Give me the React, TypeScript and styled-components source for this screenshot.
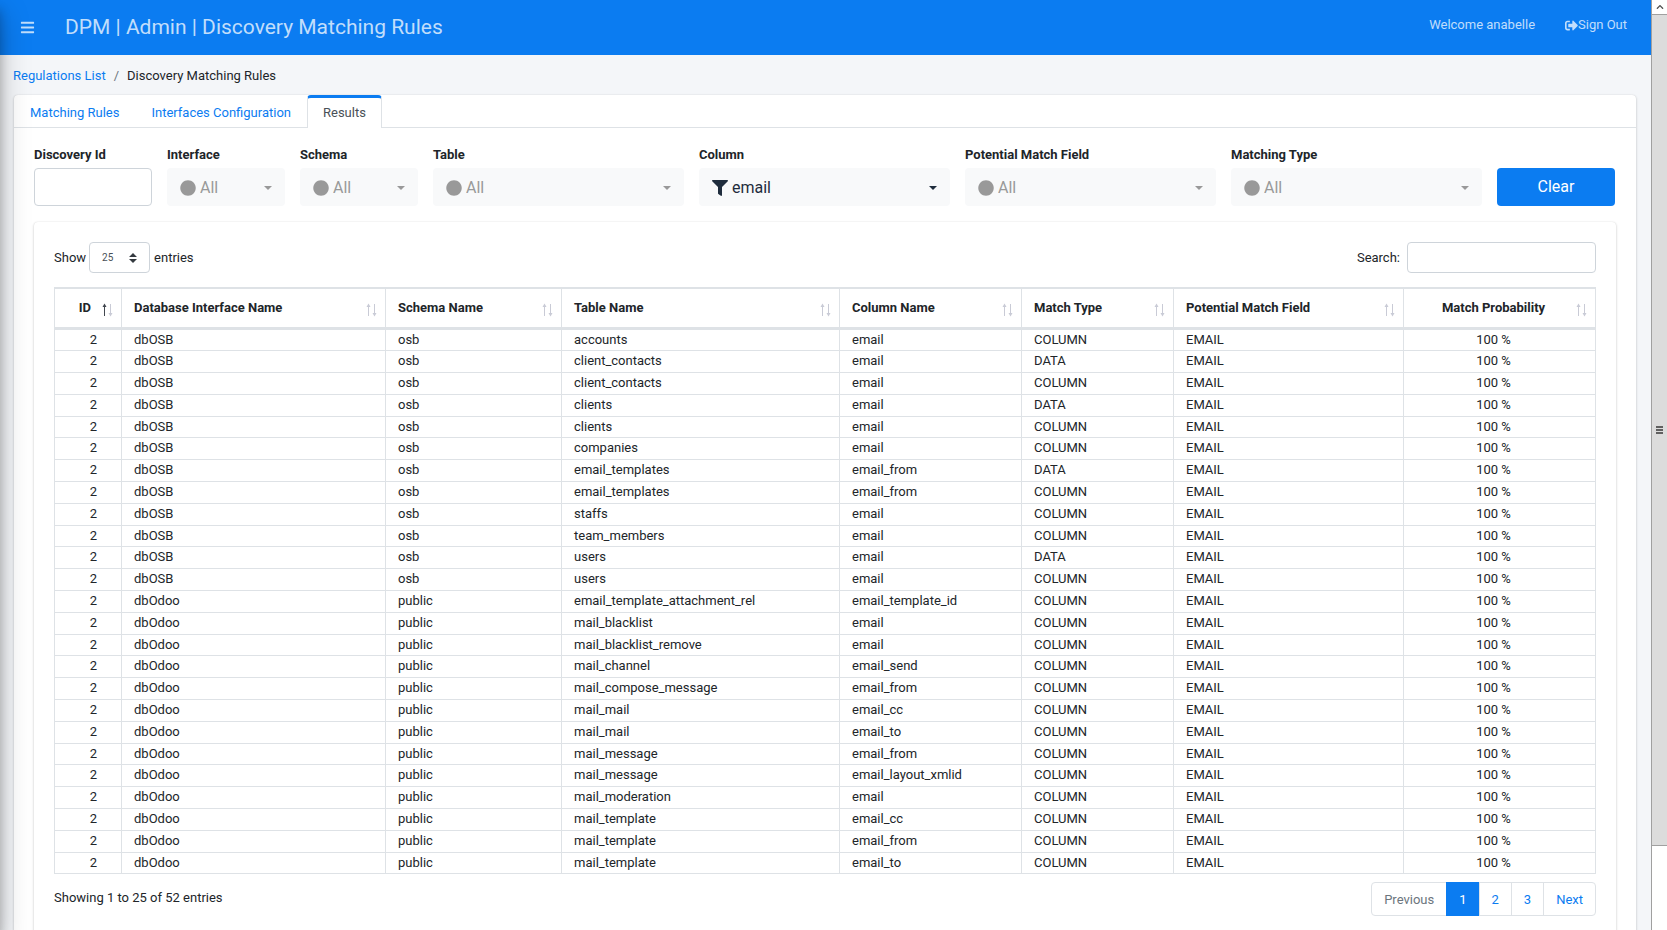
import React from "react";
import styled, { createGlobalStyle, css } from "styled-components";
import { FaBars, FaCircle, FaFilter, FaSignOutAlt, FaChevronUp } from "react-icons/fa";

const blue = "#0b7cf1";
const line = "#dee2e6";
const ink = "#212529";

const GlobalStyle = createGlobalStyle`
  *, *::before, *::after { box-sizing: border-box; }
  body {
    margin: 0;
    background: #f4f6f9;
    color: ${ink};
    font-family: Roboto, "Liberation Sans", sans-serif;
    font-size: 13px;
    line-height: 20px;
  }
  button, input, select { font: inherit; color: inherit; }
  a { color: ${blue}; text-decoration: none; }
`;

const Shell = styled.div`
  display: flex;
  height: 100vh;
  overflow: hidden;
  position: relative;
`;

const SidebarEdge = styled.div`
  position: absolute;
  top: 0;
  bottom: 0;
  left: -250px;
  width: 250px;
  z-index: 2;
  pointer-events: none;
  box-shadow: 0 14px 28px rgba(0, 0, 0, 0.25), 0 10px 10px rgba(0, 0, 0, 0.22);
`;

const Page = styled.div`
  flex: 1;
  min-width: 0;
`;

const Header = styled.header`
  display: flex;
  align-items: center;
  height: 55px;
  padding: 0 24px 0 20px;
  background: ${blue};
  color: rgba(255, 255, 255, 0.75);
`;

const MenuButton = styled.button`
  display: flex;
  padding: 0;
  border: 0;
  background: none;
  font-size: 15px;
`;

const Title = styled.h1`
  flex: 1;
  margin: 0 0 0 30px;
  padding-bottom: 2px;
  font-size: 21px;
  line-height: 24px;
  font-weight: 400;
`;

const UserNav = styled.nav`
  display: flex;
  gap: 30px;
  padding-bottom: 5px;
  a {
    display: flex;
    align-items: center;
    color: inherit;
  }
`;

const Breadcrumb = styled.nav`
  display: flex;
  gap: 8px;
  padding: 11px 13px 9px;
  span { color: #6c757d; }
`;

const Card = styled.main`
  margin: 0 15px 0 14px;
  background: #fff;
  border-radius: 4px;
  box-shadow: 0 0 1px rgba(0, 0, 0, 0.125), 0 1px 3px rgba(0, 0, 0, 0.2);
`;

const Tabs = styled.div`
  display: flex;
  height: 33px;
  border-bottom: 1px solid ${line};
`;

const Tab = styled.button<{ $active?: boolean }>`
  height: 33px;
  padding: 2px 16px 0;
  border: 0;
  background: none;
  color: ${blue};
  ${(p) =>
    p.$active &&
    css`
      padding: 0 15px 1px;
      border: 1px solid ${line};
      border-top: 3px solid ${blue};
      border-bottom: 0;
      border-radius: 4px 4px 0 0;
      background: #fff;
      color: #495057;
    `}
`;

const Filters = styled.form`
  display: grid;
  grid-template-columns: repeat(12, minmax(0, 1fr));
  gap: 15px;
  align-items: end;
  padding: 17px 21px 16px 20px;
`;

const Field = styled.div<{ $span: number }>`
  grid-column: span ${(p) => p.$span};
  display: flex;
  flex-direction: column;
  gap: 3px;
  label { font-weight: 700; }
`;

const TextInput = styled.input`
  width: 100%;
  height: 38px;
  padding: 0 12px;
  border: 1px solid #ced4da;
  border-radius: 4px;
  background: #fff;
`;

const Picker = styled.div<{ $on?: boolean }>`
  display: flex;
  align-items: center;
  gap: 4px;
  height: 38px;
  padding: 1px 13px 0;
  border-radius: 4px;
  background: #f8f9fa;
  color: ${(p) => (p.$on ? "#1f2d3d" : "#999")};
  font-size: 16px;
  line-height: 24px;
  svg { flex: none; }
  select {
    flex: 1;
    min-width: 0;
    padding: 0;
    border: 0;
    background: none;
    appearance: none;
  }
  &::after {
    content: "";
    border: 4px solid transparent;
    border-top-color: currentColor;
    border-bottom: 0;
  }
`;

const ClearButton = styled.button`
  height: 38px;
  border: 0;
  border-radius: 4px;
  background: ${blue};
  color: #fff;
  font-size: 16px;
  line-height: 24px;
`;

const ResultsCard = styled.section`
  margin: 0 20px;
  padding: 20px;
  border-radius: 4px;
  box-shadow: 0 0 1px rgba(0, 0, 0, 0.125), 0 1px 3px rgba(0, 0, 0, 0.2);
`;

const Bar = styled.div`
  display: flex;
  justify-content: space-between;
  align-items: center;
  height: 31px;
  label {
    display: flex;
    align-items: center;
  }
`;

const LengthBox = styled.span`
  display: flex;
  align-items: center;
  width: 61px;
  height: 31px;
  margin: 0 4px 0 3px;
  padding: 0 12px;
  border: 1px solid #ced4da;
  border-radius: 4px;
  select {
    flex: 1;
    min-width: 0;
    padding: 0;
    border: 0;
    background: none;
    appearance: none;
    color: #495057;
    font-size: 10px;
  }
`;

const SearchInput = styled(TextInput)`
  width: 189px;
  height: 31px;
  margin-left: 7px;
`;

const Table = styled.table`
  width: calc(100% - 1px);
  margin-top: 14px;
  table-layout: fixed;
  border-collapse: collapse;
  line-height: 1.6;
`;

const pads = {
  id: "0 24px 0 0",
  text: "0 12px",
  prob: "0 24px 0 12px",
};
const headPads = {
  id: "1px 30px 0 0",
  text: "1px 12px 0",
  prob: "1px 24px 0 12px",
};
type Kind = keyof typeof pads;
const aligns: Record<Kind, string> = { id: "right", text: "left", prob: "center" };

const HeadCell = styled.th<{ $kind: Kind }>`
  position: relative;
  height: 40px;
  padding: ${(p) => headPads[p.$kind]};
  border: 1px solid ${line};
  border-top-width: 2px;
  border-bottom-width: 3px;
  text-align: ${(p) => aligns[p.$kind]};
  font-weight: 700;
`;

const SortIcon = styled.svg`
  position: absolute;
  right: 6px;
  bottom: 10px;
`;

const Cell = styled.td<{ $kind: Kind }>`
  padding: ${(p) => pads[p.$kind]};
  border: 1px solid ${line};
  text-align: ${(p) => aligns[p.$kind]};
`;

const FootBar = styled.div`
  display: flex;
  justify-content: space-between;
  align-items: center;
  margin-top: 8px;
`;

const Summary = styled.span`
  padding-bottom: 2px;
`;

const Pager = styled.nav`
  display: flex;
  height: 34px;
  border: 1px solid ${line};
  border-radius: 4px;
`;

const PageButton = styled.button<{ $active?: boolean }>`
  padding: 1px 12px 0;
  border: 0;
  background: none;
  color: ${blue};
  & + & { border-left: 1px solid ${line}; }
  &:disabled { color: #6c757d; }
  ${(p) =>
    p.$active &&
    css`
      margin: -1px 0;
      && { border-left-color: ${blue}; }
      background: ${blue};
      color: #fff;
    `}
`;

const ScrollTrack = styled.div`
  display: flex;
  flex-direction: column;
  width: 16px;
  border-left: 1px solid #a0a0a0;
  background: #fff;
`;

const ScrollArrow = styled.div`
  display: flex;
  align-items: center;
  justify-content: center;
  height: 14px;
  color: #505050;
  font-size: 8px;
`;

const ScrollThumb = styled.div`
  display: flex;
  flex-direction: column;
  align-items: center;
  justify-content: center;
  gap: 1px;
  height: 90%;
  flex: none;
  max-height: calc(100% - 98px);
  border: solid #a0a0a0;
  border-width: 1px 0;
  background: #dcdcdc;
  i {
    width: 7px;
    height: 2px;
    background: #606060;
  }
`;

const columns: { name: string; width: number; kind: Kind }[] = [
  { name: "ID", width: 67, kind: "id" },
  { name: "Database Interface Name", width: 264, kind: "text" },
  { name: "Schema Name", width: 176, kind: "text" },
  { name: "Table Name", width: 278, kind: "text" },
  { name: "Column Name", width: 182, kind: "text" },
  { name: "Match Type", width: 152, kind: "text" },
  { name: "Potential Match Field", width: 230, kind: "text" },
  { name: "Match Probability", width: 192, kind: "prob" },
];

const osb = [
  ["accounts", "email", "COLUMN"],
  ["client_contacts", "email", "DATA"],
  ["client_contacts", "email", "COLUMN"],
  ["clients", "email", "DATA"],
  ["clients", "email", "COLUMN"],
  ["companies", "email", "COLUMN"],
  ["email_templates", "email_from", "DATA"],
  ["email_templates", "email_from", "COLUMN"],
  ["staffs", "email", "COLUMN"],
  ["team_members", "email", "COLUMN"],
  ["users", "email", "DATA"],
  ["users", "email", "COLUMN"],
];

const odoo = [
  ["email_template_attachment_rel", "email_template_id"],
  ["mail_blacklist", "email"],
  ["mail_blacklist_remove", "email"],
  ["mail_channel", "email_send"],
  ["mail_compose_message", "email_from"],
  ["mail_mail", "email_cc"],
  ["mail_mail", "email_to"],
  ["mail_message", "email_from"],
  ["mail_message", "email_layout_xmlid"],
  ["mail_moderation", "email"],
  ["mail_template", "email_cc"],
  ["mail_template", "email_from"],
  ["mail_template", "email_to"],
];

const rows = [
  ...osb.map(([table, column, type]) => ["2", "dbOSB", "osb", table, column, type, "EMAIL", "100 %"]),
  ...odoo.map(([table, column]) => ["2", "dbOdoo", "public", table, column, "COLUMN", "EMAIL", "100 %"]),
];

const pickers = [
  { id: "interface", label: "Interface", span: 1, value: "All" },
  { id: "schema", label: "Schema", span: 1, value: "All" },
  { id: "table", label: "Table", span: 2, value: "All" },
  { id: "column", label: "Column", span: 2, value: "email" },
  { id: "field", label: "Potential Match Field", span: 2, value: "All" },
  { id: "type", label: "Matching Type", span: 2, value: "All" },
];

function SortArrows({ sorted }: { sorted: boolean }) {
  return (
    <SortIcon width="13" height="14" viewBox="0 0 13 14" aria-hidden="true">
      <g fill={sorted ? "#42474f" : "#c9cbd6"}>
        <path d="M2 2h1v11H2z" />
        <path d="M2.5 0.5L4.5 4h-4z" />
      </g>
      <g fill="#c9cbd6">
        <path d="M8 1h1v11H8z" />
        <path d="M8.5 13.5L10.5 10h-4z" />
      </g>
    </SortIcon>
  );
}

export default function App() {
  return (
    <Shell>
      <GlobalStyle />
      <SidebarEdge />
      <Page>
        <Header>
          <MenuButton aria-label="Toggle menu"><FaBars /></MenuButton>
          <Title>DPM | Admin | Discovery Matching Rules</Title>
          <UserNav>
            <a href="#profile">Welcome anabelle</a>
            <a href="#signout"><FaSignOutAlt />Sign Out</a>
          </UserNav>
        </Header>
        <Breadcrumb>
          <a href="#regulations">Regulations List</a>
          <span>/</span>
          Discovery Matching Rules
        </Breadcrumb>
        <Card>
          <Tabs role="tablist">
            <Tab role="tab">Matching Rules</Tab>
            <Tab role="tab">Interfaces Configuration</Tab>
            <Tab role="tab" aria-selected $active>Results</Tab>
          </Tabs>
          <Filters onSubmit={(e) => e.preventDefault()}>
            <Field $span={1}>
              <label htmlFor="discovery">Discovery Id</label>
              <TextInput id="discovery" />
            </Field>
            {pickers.map((p) => (
              <Field key={p.id} $span={p.span}>
                <label htmlFor={p.id}>{p.label}</label>
                <Picker $on={p.value !== "All"}>
                  {p.value === "All" ? <FaCircle /> : <FaFilter />}
                  <select id={p.id}>
                    <option>{p.value}</option>
                  </select>
                </Picker>
              </Field>
            ))}
            <ClearButton type="reset">Clear</ClearButton>
          </Filters>
          <ResultsCard>
            <Bar>
              <label>
                Show
                <LengthBox>
                  <select defaultValue="25">
                    <option>25</option>
                  </select>
                  <svg width="8" height="10" viewBox="0 0 4 5" aria-hidden="true">
                    <path fill="#343a40" d="M2 0L0 2h4zm0 5L0 3h4z" />
                  </svg>
                </LengthBox>
                entries
              </label>
              <label>
                Search:
                <SearchInput type="search" />
              </label>
            </Bar>
            <Table>
              <colgroup>
                {columns.map((c) => <col key={c.name} width={c.width} />)}
              </colgroup>
              <thead>
                <tr>
                  {columns.map((c) => (
                    <HeadCell key={c.name} $kind={c.kind}>
                      {c.name}
                      <SortArrows sorted={c.name === "ID"} />
                    </HeadCell>
                  ))}
                </tr>
              </thead>
              <tbody>
                {rows.map((row, r) => (
                  <tr key={r}>
                    {row.map((value, c) => (
                      <Cell key={c} $kind={columns[c].kind}>{value}</Cell>
                    ))}
                  </tr>
                ))}
              </tbody>
            </Table>
            <FootBar>
              <Summary>Showing 1 to 25 of 52 entries</Summary>
              <Pager aria-label="Pages">
                <PageButton disabled>Previous</PageButton>
                <PageButton $active>1</PageButton>
                <PageButton>2</PageButton>
                <PageButton>3</PageButton>
                <PageButton>Next</PageButton>
              </Pager>
            </FootBar>
          </ResultsCard>
        </Card>
      </Page>
      <ScrollTrack aria-hidden="true">
        <ScrollArrow><FaChevronUp /></ScrollArrow>
        <ScrollThumb><i /><i /><i /></ScrollThumb>
      </ScrollTrack>
    </Shell>
  );
}
